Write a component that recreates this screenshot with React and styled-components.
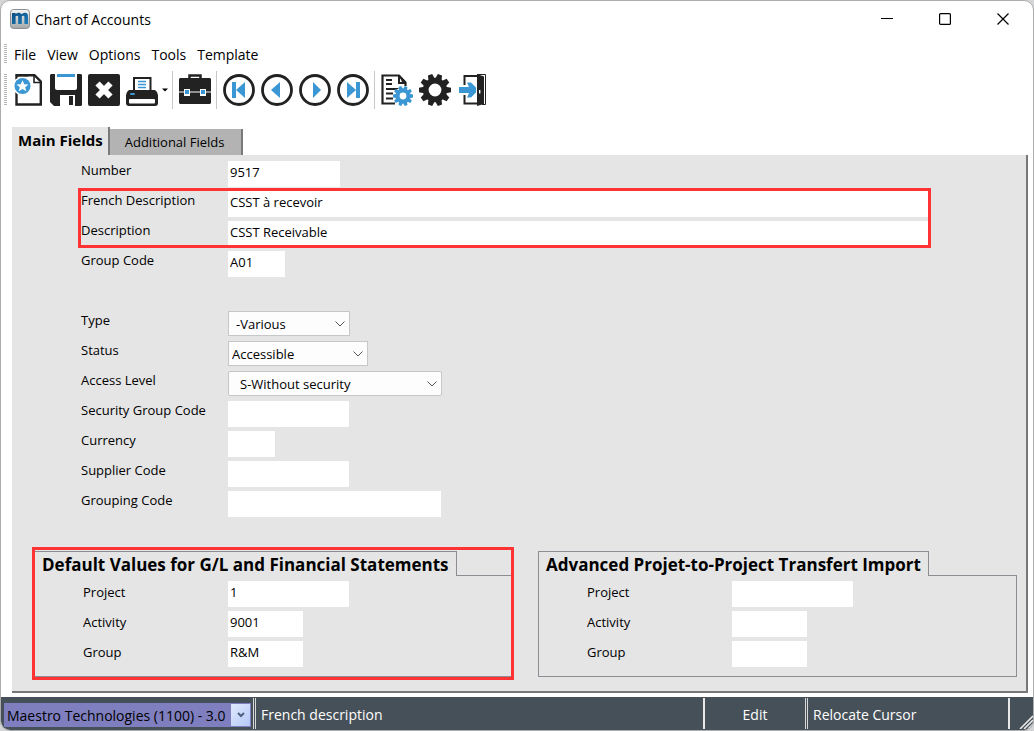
import { useState } from "react";
import styled, { createGlobalStyle } from "styled-components";

const INK = "#222222";
const BLUE = "#3b97d3";

const MENUS = ["File", "View", "Options", "Tools", "Template"];

export default function App() {
  const [tab, setTab] = useState("main");

  return (
    <>
      <GlobalStyle />
      <Window>
        <TitleBar>
          <AppLogo />
          <Title>Chart of Accounts</Title>
          <WindowButtons>
            <WindowButton aria-label="Minimize"><MinimizeIcon /></WindowButton>
            <WindowButton aria-label="Maximize"><MaximizeIcon /></WindowButton>
            <WindowButton aria-label="Close"><CloseIcon /></WindowButton>
          </WindowButtons>
        </TitleBar>

        <MenuBar>
          <Grip $height={20} />
          {MENUS.map((menu) => (
            <MenuButton key={menu}>{menu}</MenuButton>
          ))}
        </MenuBar>

        <Toolbar>
          <Grip $height={32} />
          <ToolButton aria-label="New"><NewIcon /></ToolButton>
          <ToolButton aria-label="Save"><SaveIcon /></ToolButton>
          <ToolButton aria-label="Delete"><DeleteIcon /></ToolButton>
          <PrintGroup>
            <ToolButton aria-label="Print"><PrintIcon /></ToolButton>
            <DropButton aria-label="Print options"><DropIcon /></DropButton>
          </PrintGroup>
          <Divider />
          <ToolButton aria-label="Toolbox"><CaseIcon /></ToolButton>
          <Divider />
          <ToolButton aria-label="First"><NavIcon shape="first" /></ToolButton>
          <ToolButton aria-label="Previous"><NavIcon shape="previous" /></ToolButton>
          <ToolButton aria-label="Next"><NavIcon shape="next" /></ToolButton>
          <ToolButton aria-label="Last"><NavIcon shape="last" /></ToolButton>
          <Divider />
          <ToolButton aria-label="Report settings"><ReportIcon /></ToolButton>
          <ToolButton aria-label="Settings"><GearIcon /></ToolButton>
          <ToolButton aria-label="Exit"><ExitIcon /></ToolButton>
        </Toolbar>

        <Tabs role="tablist">
          <Tab role="tab" $active={tab === "main"} onClick={() => setTab("main")}>
            Main Fields
          </Tab>
          <Tab role="tab" $active={tab === "more"} onClick={() => setTab("more")}>
            Additional Fields
          </Tab>
        </Tabs>

        <Panel>
          <Form>
            <TextRow id="number" label="Number" value="9517" width={112} />
            <Marked>
              <TextRow id="frDesc" label="French Description" value="CSST à recevoir" />
              <TextRow id="desc" label="Description" value="CSST Receivable" />
            </Marked>
            <TextRow id="group" label="Group Code" value="A01" width={57} />
            <Spacer />
            <SelectRow id="type" label="Type" value="-Various" width={122} indent={7} framed />
            <SelectRow id="status" label="Status" value="Accessible" width={140} indent={3} framed />
            <SelectRow id="access" label="Access Level" value="S-Without security" width={214} indent={11} />
            <TextRow id="secGroup" label="Security Group Code" width={121} />
            <TextRow id="currency" label="Currency" width={47} />
            <TextRow id="supplier" label="Supplier Code" width={121} />
            <TextRow id="grouping" label="Grouping Code" width={213} />
          </Form>

          <Groups>
            <GroupBox id="gl" title="Default Values for G/L and Financial Statements"
                      values={["1", "9001", "R&M"]} marked />
            <GroupBox id="adv" title="Advanced Projet-to-Project Transfert Import"
                      values={["", "", ""]} />
          </Groups>
        </Panel>

        <StatusBar>
          <Company>
            <CompanySelect aria-label="Company">
              <option>Maestro Technologies (1100) - 3.0</option>
            </CompanySelect>
            <CompanyArrow><Chevron color="#4d6185" bold /></CompanyArrow>
          </Company>
          <StatusCell $grow $double>French description</StatusCell>
          <StatusCell $width={102} $center>Edit</StatusCell>
          <StatusCell $width={203} $double>Relocate Cursor</StatusCell>
          <StatusEnd><ResizeIcon /></StatusEnd>
        </StatusBar>
      </Window>
    </>
  );
}

const TextRow = ({ id, label, value = "", width }) => (
  <Row>
    <Label htmlFor={id}>{label}</Label>
    <Field id={id} defaultValue={value} $width={width} />
  </Row>
);

const SelectRow = ({ id, label, value, width, indent, framed }) => (
  <Row>
    <Label htmlFor={id}>{label}</Label>
    <SelectWrap $width={width}>
      <Select id={id} $indent={indent} $framed={framed}>
        <option>{value}</option>
      </Select>
      <SelectArrow><Chevron color="#555555" /></SelectArrow>
    </SelectWrap>
  </Row>
);

const GroupBox = ({ id, title, values, marked }) => (
  <Group $marked={marked}>
    <GroupHead>
      <GroupTitle>{title}</GroupTitle>
      <GroupLine />
    </GroupHead>
    <GroupBody>
      <TextRow id={`${id}-project`} label="Project" value={values[0]} width={121} />
      <TextRow id={`${id}-activity`} label="Activity" value={values[1]} width={75} />
      <TextRow id={`${id}-group`} label="Group" value={values[2]} width={75} />
    </GroupBody>
  </Group>
);

/* ---- icons ---- */

const AppLogo = () => (
  <svg width="20" height="20" viewBox="0 0 20 20">
    <defs>
      <linearGradient id="logoBg" x1="0" y1="0" x2="0" y2="1">
        <stop offset="0" stopColor="#f4f4f4" />
        <stop offset="1" stopColor="#a4a7a9" />
      </linearGradient>
      <linearGradient id="logoMark" x1="0" y1="0" x2="1" y2="1">
        <stop offset="0" stopColor="#0a4c82" />
        <stop offset="1" stopColor="#1c80bd" />
      </linearGradient>
    </defs>
    <rect x="0.5" y="0.5" width="19" height="19" rx="3" fill="url(#logoBg)" stroke="#8b8f92" />
    <path d="M2 4H5.400L5.800 5Q9 2.600 11.400 5.200Q18 1.500 18 8V15H14.400V8Q14.400 6 11.800 7.200V15H8.200V8Q8.200 6 5.600 7.200V15H2Z"
          fill="url(#logoMark)" />
  </svg>
);

const MinimizeIcon = () => (
  <svg width="12" height="12"><path d="M0 5.500H12" stroke="#000" /></svg>
);

const MaximizeIcon = () => (
  <svg width="12" height="12">
    <rect x="0.6" y="0.6" width="10.800" height="10.800" rx="1" fill="none" stroke="#000" strokeWidth="1.200" />
  </svg>
);

const CloseIcon = () => (
  <svg width="12" height="12"><path d="M0.500 0.500L11.500 11.500M11.500 0.500L0.500 11.500" stroke="#000" strokeWidth="1.200" /></svg>
);

const NewIcon = () => (
  <svg width="32" height="32" viewBox="0 0 32 32">
    <path d="M4.500 1.200H22.500L28.800 7.500V30.500H4.500Z" fill="#fff" stroke={INK} strokeWidth="2.400" />
    <path d="M22 1V8.500H29" fill="none" stroke={INK} strokeWidth="1.600" />
    <circle cx="10.500" cy="12" r="9.600" fill="#fff" />
    <path d="M6 1.200H16" stroke={INK} strokeWidth="2.400" />
    <circle cx="10.500" cy="12" r="8" fill={BLUE} />
    <path d="M10.500 6.200L12.200 10.200L16.500 10.500L13.200 13.200L14.300 17.300L10.500 15L6.700 17.300L7.800 13.200L4.500 10.500L8.800 10.200Z" fill="#fff" />
  </svg>
);

const SaveIcon = () => (
  <svg width="32" height="32" viewBox="0 0 32 32">
    <path d="M1 0H31L32 1V31L31 32H4L0 28V1Z" fill={INK} />
    <path d="M5 0H27V14Q27 16 25 16H7Q5 16 5 14Z" fill="#fff" />
    <rect x="7" y="0" width="18" height="3" fill={BLUE} />
    <rect x="10" y="21" width="15" height="11" fill="#fff" />
    <rect x="19" y="22" width="4" height="9" fill={INK} />
  </svg>
);

const DeleteIcon = () => (
  <svg width="32" height="32" viewBox="0 0 32 32">
    <rect width="32" height="32" rx="2" fill={INK} />
    <path d="M9.500 9.500L22.500 22.500M22.500 9.500L9.500 22.500" stroke="#fff" strokeWidth="6" />
  </svg>
);

const PrintIcon = () => (
  <svg width="32" height="32" viewBox="0 0 32 32">
    <path d="M8 18V4H24.500V18" fill="#fff" stroke={INK} strokeWidth="2" />
    <path d="M12 7.500H20M12 10.500H20M12 13.500H20" stroke={BLUE} strokeWidth="1.500" />
    <path d="M3 16H29Q32 18 32 21V29Q32 32 29 32H3Q0 32 0 29V21Q0 18 3 16Z" fill={INK} />
    <rect x="4" y="19" width="5" height="2" rx="1" fill={BLUE} />
    <rect x="3" y="25" width="26" height="4.500" rx="1" fill="#fff" />
  </svg>
);

const DropIcon = () => (
  <svg width="6" height="4"><path d="M0 0.500H6L3 3.500Z" fill="#000" /></svg>
);

const CaseIcon = () => (
  <svg width="32" height="32" viewBox="0 0 32 32">
    <path d="M10.500 4V1.500H21.500V4" fill="none" stroke={INK} strokeWidth="2.500" />
    <path d="M1 4H31L32 5V29L31 30H1L0 29V5Z" fill={INK} />
    <path d="M0 18H5M11 18H21M27 18H32" stroke="#fff" strokeWidth="1.200" />
    <rect x="5" y="15" width="6" height="7" fill="#fff" />
    <rect x="21" y="15" width="6" height="7" fill="#fff" />
    <rect x="6" y="16" width="4" height="4" fill={BLUE} />
    <rect x="22" y="16" width="4" height="4" fill={BLUE} />
  </svg>
);

const NAV_SHAPES = {
  first: "M9 8H13V24H9ZM22 8V24L13 16Z",
  previous: "M19 8V24L10 16Z",
  next: "M14 8V24L22 16Z",
  last: "M10 8V24L19 16ZM19 8H23V24H19Z",
};

const NavIcon = ({ shape }) => (
  <svg width="32" height="32" viewBox="0 0 32 32">
    <circle cx="16" cy="16" r="14.500" fill="#fff" stroke={INK} strokeWidth="2.800" />
    <path d={NAV_SHAPES[shape]} fill={BLUE} />
  </svg>
);

const Cog = ({ cx, cy, r, hole, color, teeth = 10 }) => (
  <g transform={`translate(${cx} ${cy})`} fill={color}>
    {Array.from({ length: teeth }, (_, i) => (
      <path key={i} transform={`rotate(${(360 / teeth) * i + 180 / teeth})`}
            d={`M${-r * 0.14} ${-r}H${r * 0.14}L${r * 0.22} ${-r * 0.6}H${-r * 0.22}Z`} />
    ))}
    <circle r={(r * 0.76 + hole) / 2} fill="none" stroke={color} strokeWidth={r * 0.76 - hole} />
  </g>
);

const ReportIcon = () => (
  <svg width="32" height="32" viewBox="0 0 32 32">
    <path d="M24.500 12V8.500L18 1.500H1.500V29.500H14" fill="none" stroke={INK} strokeWidth="2.200" />
    <path d="M18 1V9H25" fill="none" stroke={INK} strokeWidth="2" />
    <path d="M18 1L25 8H21Z" fill={INK} />
    <path d="M5 6H11M5 10H11M5 15H18M5 19.500H12M5 24.500H12" stroke={INK} strokeWidth="1.800" />
    <circle cx="22" cy="22" r="9" fill="#fff" />
    <Cog cx={22} cy={22} r={10} hole={3.4} color={BLUE} />
  </svg>
);

const GearIcon = () => (
  <svg width="32" height="32" viewBox="0 0 32 32">
    <Cog cx={16} cy={16} r={16} hole={6.4} color={INK} />
  </svg>
);

const ExitIcon = () => (
  <svg width="32" height="32" viewBox="0 0 32 32">
    <path d="M7.500 11V2H20M7.500 21V29.500H20" fill="none" stroke={INK} strokeWidth="2" />
    <path d="M20 0L27 2.500V30L20 32Z" fill={INK} />
    <path d="M20 0.500H28.500V30.500H25" fill="none" stroke={INK} strokeWidth="1" />
    <rect x="22" y="16" width="1.400" height="3.500" fill="#fff" />
    <path d="M2 13H12L10 8.500H14L19 13.500V18.500L14 23.500H10L12 19H2Z" fill={BLUE} />
  </svg>
);

const Chevron = ({ color, bold }) => (
  <svg width="10" height="6">
    <path d={bold ? "M2 1L5 4L8 1" : "M0.500 0.500L5 5L9.500 0.500"}
          fill="none" stroke={color} strokeWidth={bold ? 2 : 1} />
  </svg>
);

const ResizeIcon = () => (
  <svg width="14" height="14">
    <path d="M1 14L14 1M5 14L14 5M9 14L14 9" stroke="#e6e6e6" strokeWidth="1.600" />
  </svg>
);

/* ---- styles ---- */

const GlobalStyle = createGlobalStyle`
  * {
    box-sizing: border-box;
  }

  body {
    margin: 0;
    background-color: #d3d5d7;
    font-family: "Open Sans", "Noto Sans", sans-serif;
    font-size: 13px;
    color: #000;
  }

  button, input, select {
    font: inherit;
    color: inherit;
    margin: 0;
    padding: 0;
    border: 0;
    border-radius: 0;
    outline: 0;
  }

  svg {
    display: block;
  }
`;

const Window = styled.div`
  display: flex;
  flex-direction: column;
  min-height: 100vh;
  overflow: hidden;
  background-color: #fff;
  border: 1px solid #adadad;
  border-radius: 10px;
`;

const TitleBar = styled.header`
  display: flex;
  align-items: center;
  height: 36px;
  padding: 0 1px 0 9px;
`;

const Title = styled.h1`
  flex: 1;
  margin: 0 0 0 5px;
  font-size: 14px;
  font-weight: 400;
`;

const WindowButtons = styled.div`
  display: flex;
`;

const WindowButton = styled.button`
  display: flex;
  align-items: center;
  justify-content: center;
  width: 58px;
  height: 36px;
  background: none;
`;

const MenuBar = styled.nav`
  display: flex;
  align-items: center;
  gap: 11px;
  height: 30px;
  margin-top: 2px;
  padding-left: 3px;
`;

const Grip = styled.div`
  width: 3px;
  height: ${({ $height }) => $height}px;
  margin-right: -4px;
  background: repeating-linear-gradient(#b4b4b4 0 1px, #fff 1px 2px);
`;

const MenuButton = styled.button`
  font-size: 14px;
  background: none;
`;

const Toolbar = styled.div`
  display: flex;
  align-items: center;
  gap: 6px;
  height: 42px;
  padding-left: 3px;

  & > ${Grip} {
    margin-right: -1px;
  }
`;

const ToolButton = styled.button`
  width: 32px;
  height: 32px;
  background: none;
`;

const PrintGroup = styled.div`
  display: flex;
  margin-right: -5px;
`;

const DropButton = styled.button`
  display: flex;
  align-items: center;
  justify-content: center;
  width: 14px;
  background: none;
`;

const Divider = styled.div`
  width: 1px;
  height: 38px;
  margin-left: -1px;
  background-color: #c8c8c8;
`;

const Tabs = styled.div`
  display: flex;
  align-items: flex-end;
  height: 44px;
  padding-left: 11px;
`;

const Tab = styled.button`
  height: ${({ $active }) => ($active ? 28 : 26)}px;
  padding: ${({ $active }) => ($active ? "0 5px 2px 6px" : "0 17px 0 15px")};
  font-size: ${({ $active }) => ($active ? 15 : 13)}px;
  font-weight: ${({ $active }) => ($active ? 700 : 400)};
  background-color: ${({ $active }) => ($active ? "#e5e5e5" : "#b3b3b3")};
  border-right: 2px solid #7a7a7a;
`;

const Panel = styled.main`
  display: flex;
  flex: 1;
  flex-direction: column;
  justify-content: space-between;
  margin: 0 5px 4px 11px;
  padding: 6px 9px 14px 22px;
  background-color: #e5e5e5;
  border-right: 2px solid #787878;
  border-bottom: 2px solid #787878;
`;

const Form = styled.form`
  display: flex;
  flex-direction: column;
  padding: 0 88px 0 47px;
`;

const Row = styled.div`
  display: flex;
  height: 30px;
`;

const Label = styled.label`
  flex: none;
  width: 147px;
  line-height: 18px;
`;

const Field = styled.input`
  flex: ${({ $width }) => ($width ? "none" : 1)};
  width: ${({ $width }) => ($width ? `${$width}px` : "auto")};
  height: 26px;
  padding: 0 2px 4px;
  background-color: #fff;
`;

/* red frame drawn over the edges of whatever it marks */
const Marked = styled.div`
  position: relative;

  &::after {
    content: "";
    position: absolute;
    inset: -3px -2px 3px -3px;
    border: 3px solid #ff3333;
    pointer-events: none;
  }
`;

const Spacer = styled.div`
  height: 30px;
`;

const SelectWrap = styled.div`
  position: relative;
  width: ${({ $width }) => $width}px;
  height: 25px;
`;

const Select = styled.select`
  appearance: none;
  width: 100%;
  height: 100%;
  padding-left: ${({ $indent }) => $indent}px;
  background-color: #fdfdfd;
  border: 1px solid #c4c8cb;
  border-radius: ${({ $framed }) => ($framed ? 0 : 2)}px;
`;

const SelectArrow = styled.span`
  position: absolute;
  top: 10px;
  right: 5px;
  pointer-events: none;
`;

const Groups = styled.div`
  display: grid;
  grid-template-columns: 1fr 1fr;
  gap: 25px;
`;

const Group = styled.section`
  position: relative;

  &::after {
    content: "";
    display: ${({ $marked }) => ($marked ? "block" : "none")};
    position: absolute;
    inset: -4px -1px -3px -2px;
    border: 3px solid #ff3333;
    pointer-events: none;
  }
`;

const GroupHead = styled.div`
  display: flex;
  height: 25px;
`;

const GroupTitle = styled.h2`
  margin: 0;
  padding: 0 7px;
  font-size: 17px;
  font-weight: 700;
  line-height: 26px;
  white-space: nowrap;
  border: 1px solid #8c8c92;
  border-bottom: 0;
`;

const GroupLine = styled.div`
  flex: 1;
  border-bottom: 1px solid #8c8c92;
`;

const GroupBody = styled.div`
  padding: 5px 0 5px 48px;
  border: 1px solid #8c8c92;
  border-top: 0;

  & ${Label} {
    width: 145px;
    line-height: 22px;
  }
`;

const StatusBar = styled.footer`
  display: flex;
  height: 33px;
  padding-left: 3px;
  font-size: 14px;
  color: #fff;
  background-color: #465059;
`;

const Company = styled.div`
  position: relative;
  width: 247px;
  height: 24px;
  margin: 6px 2px 0 0;
`;

const CompanySelect = styled.select`
  appearance: none;
  width: 100%;
  height: 100%;
  padding: 0 22px 0 3px;
  overflow: hidden;
  color: #000;
  background-color: #7f7fbf;
`;

const CompanyArrow = styled.span`
  position: absolute;
  top: 1px;
  right: 1px;
  display: flex;
  align-items: center;
  justify-content: center;
  width: 19px;
  height: 22px;
  background: linear-gradient(135deg, #e0e8fd, #b5c9f8);
  pointer-events: none;
`;

const StatusCell = styled.div`
  flex: ${({ $grow }) => ($grow ? 1 : "none")};
  width: ${({ $width }) => ($width ? `${$width}px` : "auto")};
  height: 31px;
  margin-top: 1px;
  padding: 0 5px;
  line-height: 34px;
  text-align: ${({ $center }) => ($center ? "center" : "left")};
  white-space: nowrap;
  border-left: ${({ $double }) => ($double ? "3px double #d8d8d8" : "2px solid #e8e8e8")};
`;

const StatusEnd = styled.div`
  display: flex;
  align-items: flex-end;
  justify-content: flex-end;
  width: 25px;
  height: 31px;
  margin-top: 1px;
  border-left: 2px solid #e8e8e8;
`;
